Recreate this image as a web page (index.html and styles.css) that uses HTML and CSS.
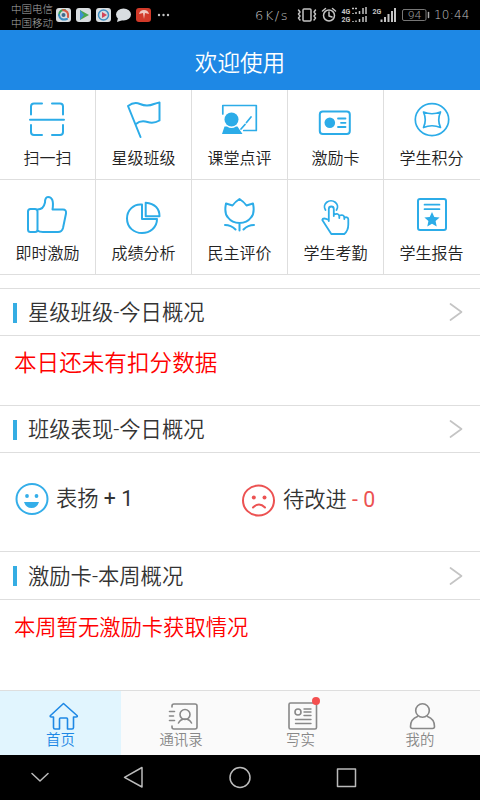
FILE: index.html
```html
<!DOCTYPE html>
<html lang="zh-CN">
<head>
<meta charset="utf-8">
<title>欢迎使用</title>
<link rel="stylesheet" href="styles.css">
</head>
<body>
<div class="phone">
  <div class="status">
    <div class="carriers"><span>中国电信</span><span>中国移动</span></div>
    <svg class="notices" viewBox="54 0 120 30">
      <g fill="#d9dde0">
        <rect x="56" y="8" width="15" height="14" rx="3"/>
        <rect x="76" y="8" width="15" height="14" rx="3"/>
        <rect x="96" y="8" width="15" height="14" rx="3"/>
        <ellipse cx="123.500" cy="14.500" rx="7.500" ry="6"/>
        <path d="M118 18l-1 4 6-2z"/>
      </g>
      <g fill="none" stroke-width="2">
        <path d="M59 15a5 5 0 0 1 6-5" stroke="#39a35a"/>
        <path d="M63 10q6 1 5 7" stroke="#d65a45"/>
        <path d="M59 15q1 6 8 4" stroke="#3b8fc4"/>
        <circle cx="103.500" cy="15" r="5" stroke="#3e8fc4" stroke-width="1.500"/>
      </g>
      <circle cx="63.500" cy="15" r="2" fill="#3b6b8c"/>
      <path d="M80 10l9 5-9 5z" fill="#4aa84e"/>
      <path d="M80 10l4 5-4 5z" fill="#3e8fd0"/>
      <path d="M102 12l5 3-5 3z" fill="#d2455a"/>
      <rect x="136" y="8" width="15" height="14" rx="3" fill="#d23a29"/>
      <path d="M139 14q1-4 5-4 4 0 5 4l-4-1-1 6-1-6z" fill="#f0c9c0"/>
      <g fill="#c4c4c4"><circle cx="159" cy="15" r="1.200"/><circle cx="163.500" cy="15" r="1.200"/><circle cx="168" cy="15" r="1.200"/></g>
    </svg>
    <span class="speed">6K/s</span>
    <svg class="signals" viewBox="294 0 140 30">
      <g fill="none" stroke="#c4c4c4" stroke-width="1.500">
        <rect x="303" y="9" width="8" height="12" rx="1"/>
        <path d="M298.500 10l1.500 2-1.500 2 1.500 2-1.500 2 1.500 2M315.500 10l-1.500 2 1.500 2-1.500 2 1.500 2-1.500 2"/>
        <circle cx="329" cy="15.500" r="5.500"/>
        <path d="M329 12v4l3 1M322.500 11l3-2.500M335.500 11l-3-2.500"/>
        <path d="M353 14v-1M356 14v-2M359.500 14v-3M363 14V8M366 14V7M353 22v-1M356 22v-1.500M359.500 22v-3M363 22v-5M366 22v-6" stroke-linecap="butt"/>
        <path d="M352 8.500h6" stroke-dasharray="2 1" stroke-linecap="butt"/>
        <path d="M381.500 22v-2.500M385 22v-5M388.500 22v-8M392 22V11M395 22V8" stroke-width="2" stroke-linecap="butt"/>
        <rect x="402.500" y="9.500" width="23.500" height="11" rx="1.500" stroke="#777" stroke-width="1"/>
        <path d="M428.500 12.500v5" stroke="#aaa"/>
      </g>
      <g class="mini"><text x="341.500" y="14">4G</text><text x="341.500" y="22">2G</text><text x="372.500" y="14">2G</text></g>
      <text class="battery" x="408" y="18.500" textLength="13" lengthAdjust="spacingAndGlyphs">94</text>
    </svg>
    <span class="clock">10:44</span>
  </div>

  <header class="title">欢迎使用</header>

  <nav class="tiles">
    <a class="tile"><svg viewBox="0 90 96 56"><path d="M31 114.500v-8q0-3 3-3h8M52 103.500h8q3 0 3 3v8M31 125v7q0 3 3 3h8M52 135h8q3 0 3-3v-7M30 119.800h34"/></svg><span>扫一扫</span></a>
    <a class="tile"><svg viewBox="96 90 96 56"><path d="M140.500 137L128 106q6-4.500 12-2 7 3 14 0 3-1 5.500-1.500v18q-6 3.500-12 1.500-7-2-11.500 2"/></svg><span>星级班级</span></a>
    <a class="tile"><svg viewBox="192 90 96 56"><path class="thin" d="M222.800 114v-8.500h33.500v25h-12.500M241 129l4-4.500M246.500 122.500l4.500-5.500"/><circle class="solid" cx="231.500" cy="119.500" r="7"/><path class="solid" d="M224.500 126.500h2.500q4.500 3 9 0h1.500l5 7.500h-20.500z"/></svg><span>课堂点评</span></a>
    <a class="tile"><svg viewBox="288 90 96 56"><rect x="319.800" y="111.500" width="30" height="22.500" rx="3"/><circle class="solid" cx="329.800" cy="122.800" r="5.300"/><path d="M338 118.500h7.500M341 122.800h4.500M338 127h7.500" stroke-width="1.800"/></svg><span>激励卡</span></a>
    <a class="tile"><svg viewBox="384 90 96 56"><ellipse class="thin" cx="432" cy="119.600" rx="16.700" ry="16"/><path class="thin" d="M423.500 112q8.500 3.500 17 0-3.500 8 0 15.500-8.500-3.500-17 0 3.500-7.500 0-15.500z"/></svg><span>学生积分</span></a>
    <a class="tile"><svg viewBox="0 180 96 60"><path d="M37.500 211.500q0-2.500-2.500-2.500h-4.500q-2.500 0-2.500 2.500v18q0 2.500 2.500 2.500h4.500q2.500 0 2.500-2.500zM37.500 209.500q6 0 7.500-7 0-5.500 3-5.500 6.500 0 4.500 12.500h10.500q3.500 0 3 4l-3 14.500q-1 4-5 4H43q-4 0-5.500-1.500"/></svg><span>即时激励</span></a>
    <a class="tile"><svg viewBox="96 180 96 60"><path d="M142 204.500c-8.500-1-15 6-15 14 0 9 7 14.500 15 14.500s15-5.500 15-14h-15zM145.700 202.700v13.500h13.800q0-12-13.800-13.500z"/></svg><span>成绩分析</span></a>
    <a class="tile"><svg viewBox="192 180 96 60"><path d="M232.500 205.500q3-4 7-6.500 4 2.500 7 6.500l6.500-2q2 10-2 14-4 5.500-11.500 5.500T228 217.500q-4-4-2-14zM239.500 223v7.500M225 225q6 0 10.500 4.500M254 225q-6 0-10.500 4.500"/></svg><span>民主评价</span></a>
    <a class="tile"><svg viewBox="288 180 96 60"><path d="M325.500 210a6.500 6 0 1 1 11 0" stroke-width="1.800"/><path d="M328.800 221v-12q0-2.500 2.500-2.500t2.500 2.500v7M333.800 214.500q5-2 5.500 2v1.500M339.300 215.500q4.500-1.500 5 2v1.500M344.300 217.500q4-1 4 2v5q0 6-4 9.500h-13l-9-14q.5-3 6.500 0" stroke-width="1.800"/></svg><span>学生考勤</span></a>
    <a class="tile"><svg viewBox="384 180 96 60"><rect x="418" y="199" width="28" height="31" rx="2"/><path d="M424.500 204.700h15M424.500 209.200h15" stroke-width="1.700"/><path class="solid" d="M432 212l2.300 4.900 5.300.6-4 3.600 1.100 5.300-4.700-2.700-4.700 2.700 1.100-5.300-4-3.600 5.300-.6z"/></svg><span>学生报告</span></a>
  </nav>

  <main>
    <section class="card stars">
      <h2><span>星级班级-今日概况</span><svg viewBox="0 0 14 20"><path d="M1.500 2l11 8-11 8"/></svg></h2>
      <p class="notice large">本日还未有扣分数据</p>
    </section>
    <section class="card behavior">
      <h2><span>班级表现-今日概况</span><svg viewBox="0 0 14 20"><path d="M1.500 2l11 8-11 8"/></svg></h2>
      <div class="scores">
        <div class="score praise"><svg viewBox="0 0 34 34"><ellipse cx="17" cy="17" rx="15.500" ry="15"/><circle class="dot" cx="12" cy="14" r="1.900"/><circle class="dot" cx="21.500" cy="14" r="1.900"/><path class="dot" d="M9 20h15q-2 6-7.500 6T9 20z"/></svg><span>表扬 <b>+ 1</b></span></div>
        <div class="score improve"><svg viewBox="0 0 34 34"><ellipse cx="17.500" cy="17.500" rx="15.500" ry="15"/><circle class="dot" cx="12.800" cy="14.500" r="2"/><circle class="dot" cx="23.500" cy="14.500" r="2"/><path d="M12 24.500q6-6 12 0"/></svg><span>待改进 <b>- 0</b></span></div>
      </div>
    </section>
    <section class="card rewards">
      <h2><span>激励卡-本周概况</span><svg viewBox="0 0 14 20"><path d="M1.500 2l11 8-11 8"/></svg></h2>
      <p class="notice">本周暂无激励卡获取情况</p>
    </section>
  </main>

  <nav class="tabs">
    <a class="tab active"><svg viewBox="40.500 701 40 30"><path d="M63 703.500l-13 12q-1 1.500 1 1.500h2v10.500q0 1.500 1.500 1.500H59v-10q0-1 1-1h6q1 0 1 1v10h4.500q1.500 0 1.500-1.500V717h2.500q2 0 1-1.500z"/></svg><span>首页</span></a>
    <a class="tab"><svg viewBox="161 701 40 30"><path d="M172 707v-1q0-2 2-2h21q2 0 2 2v21q0 2-2 2h-21q-2 0-2-2v-1M169.500 711.500h5M169.500 716h4M169.500 720.500h5"/><circle cx="185" cy="714.500" r="5"/><path d="M178.500 723q2-4 6.500-4t6.500 4"/></svg><span>通讯录</span></a>
    <a class="tab"><svg viewBox="281 701 40 30"><rect x="289" y="703" width="27.500" height="26" rx="1.500"/><circle cx="298" cy="712" r="3"/><path d="M304 709h7M304 712h7M304 715.500h7M295.500 719.500h15.500M295.500 723.500h15.500" stroke-width="1.400"/></svg><i class="badge"></i><span>写实</span></a>
    <a class="tab"><svg viewBox="400 701 40 30"><circle cx="422.500" cy="710.500" r="6.800"/><path d="M417.500 716.500q-7 2.500-7 10 0 2 2 2h20q2 0 2-2 0-7.500-7-10"/></svg><span>我的</span></a>
  </nav>

  <div class="system">
    <svg viewBox="0 755 480 45"><path d="M32 773.500l8 7.500 8-7.500M142 767.500v19.500l-17.500-9.700zM337.500 769h18v17.500h-18z"/><circle cx="240" cy="777.500" r="10"/></svg>
  </div>
</div>
</body>
</html>
```

FILE: styles.css
```css
* { box-sizing: border-box; }

body {
  margin: 0;
  background: #fff;
  color: #333;
  font-family: Roboto, "Noto Sans CJK SC", sans-serif;
  font-weight: 350;
}

svg {
  display: block;
  fill: none;
  stroke-linecap: round;
  stroke-linejoin: round;
}

.phone {
  display: flex;
  flex-direction: column;
  width: 480px;
  height: 800px;
  overflow: hidden;
}

.status {
  display: flex;
  align-items: center;
  height: 30px;
  padding-left: 11px;
  background: #000;
  color: #c4c4c4;
  font-weight: 300;
  white-space: nowrap;
}

.carriers {
  display: flex;
  flex-direction: column;
  width: 43px;
  padding-top: 3px;
  font-size: 10.500px;
  line-height: 14px;
  color: #aaa;
}

.notices { width: 120px; height: 30px; }

.speed {
  width: 39px;
  margin-left: 81px;
  font-family: "DejaVu Sans", sans-serif;
  font-size: 13px;
  letter-spacing: 1.500px;
}

.signals { width: 140px; height: 30px; }
.signals text { fill: #c4c4c4; font-family: Roboto, sans-serif; }
.mini { font-size: 7px; font-weight: 700; }
.signals .battery { fill: #999; font-size: 10px; }

.clock {
  font-family: "DejaVu Sans", sans-serif;
  font-size: 12px;
  letter-spacing: .2px;
}

.title {
  height: 60px;
  padding-top: 3px;
  background: #1e88e5;
  color: #fff;
  font-size: 22.600px;
  line-height: 62px;
  text-align: center;
}

.tiles {
  display: grid;
  grid-template-columns: repeat(5, 96px);
  grid-template-rows: 90px 95px;
}

.tile {
  display: flex;
  flex-direction: column;
  border-right: 1px solid #dedede;
  border-bottom: 1px solid #dedede;
  color: #222;
  font-size: 16px;
  line-height: 26px;
  text-align: center;
}

.tile:nth-child(5n) { border-right: 0; }

.tile svg {
  width: 96px;
  height: 56px;
  stroke: #2cace8;
  stroke-width: 2;
}

.tile:nth-child(n+6) svg { height: 60px; }
.tile:nth-child(n+6) { line-height: 28px; }
.tile .solid { fill: #2cace8; stroke: none; }
.tile .thin { stroke-width: 1.700; }
.tile span { width: 95px; }

main {
  flex: 1;
  padding-top: 13px;
}

.card { border-top: 1px solid #dedede; }
.stars { height: 117px; }
.behavior { height: 146px; }

.card h2 {
  display: flex;
  align-items: center;
  height: 47px;
  margin: 0;
  padding: 0 17px 0 13px;
  border-bottom: 1px solid #dedede;
  font-size: 21.300px;
  font-weight: 350;
}

.rewards h2 { height: 48px; }
.card h2 span { padding-bottom: 3px; }

.card h2::before {
  content: "";
  width: 4px;
  height: 20px;
  margin: 1px 11px 0 0;
  background: #35ade3;
}

.card h2 svg {
  width: 14px;
  height: 20px;
  margin-left: auto;
  stroke: #c4c4c4;
  stroke-width: 1.700;
}

.notice {
  margin: 0;
  padding: 12px 14px;
  color: #f00;
  font-size: 21.300px;
  line-height: 32px;
}

.notice.large { font-size: 22.600px; }

.scores {
  display: flex;
  align-items: flex-start;
  padding: 29px 0 0 15px;
}

.score {
  display: flex;
  align-items: center;
  gap: 7px;
  width: 226px;
  font-size: 21.300px;
  line-height: 34px;
  white-space: pre;
}

.improve span { padding: 1px 0 0 1px; }

.score svg { width: 34px; height: 34px; stroke-width: 2; }
.praise svg { stroke: #34aee9; }
.praise .dot { fill: #34aee9; stroke: none; }
.improve svg { stroke: #ec5252; }
.improve .dot { fill: #ec5252; stroke: none; }
.score b { font-weight: 400; }
.improve b { color: #ec5252; }

.tabs {
  display: grid;
  grid-template-columns: 121px 120px 119px 120px;
  height: 65px;
  border-top: 1px solid #dedede;
  background: #fafafa;
}

.tab {
  position: relative;
  display: flex;
  flex-direction: column;
  align-items: center;
  padding-top: 10px;
  color: #888;
  font-size: 14.400px;
  line-height: 20px;
}

.tab svg {
  width: 40px;
  height: 30px;
  stroke: #888;
  stroke-width: 1.600;
}

.tab.active { background: #e1f5fe; color: #1e88e5; }
.tab.active svg { stroke: #1e88e5; }

.badge {
  position: absolute;
  top: 6px;
  left: 71px;
  width: 8px;
  height: 8px;
  border-radius: 50%;
  background: #f44f4f;
}

.system { height: 45px; background: #000; }
.system svg { width: 480px; height: 45px; stroke: #bbb; stroke-width: 1.500; }
```
